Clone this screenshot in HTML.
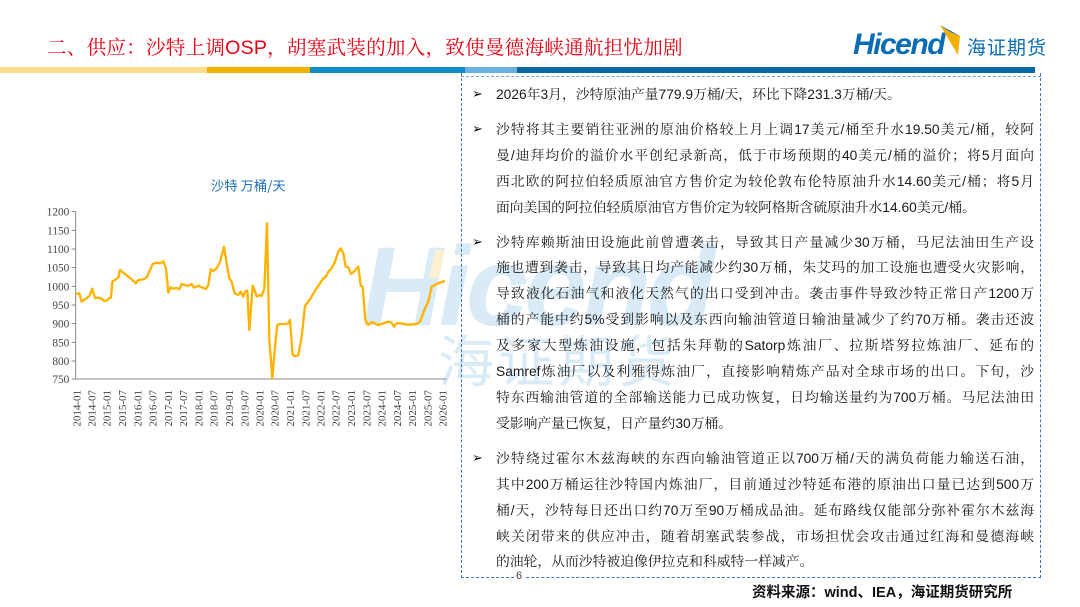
<!DOCTYPE html>
<html><head><meta charset="utf-8">
<style>
*{margin:0;padding:0;box-sizing:border-box}
body{width:1080px;height:607px;background:#fff;position:relative;overflow:hidden;font-family:"Liberation Sans","Noto Sans CJK SC",sans-serif;color:#111}
.title{position:absolute;left:47px;top:31px;font-size:19.6px;color:#e60012;font-family:"Liberation Sans","Noto Serif CJK SC",serif;white-space:nowrap;letter-spacing:0.2px}
.bar{position:absolute;top:67px;height:6px}
.box{position:absolute;left:461px;top:73px;width:580px;height:505px;border:1.5px dashed #4472c4;border-top:none}
.topdash{position:absolute;left:461px;top:76px;width:580px;border-top:1.5px dashed #7aa0d8}
.txt{position:absolute;left:474px;top:82px;width:560px;font-size:13.8px;line-height:25.9px;color:#1a1a1a;font-family:"Liberation Sans","Noto Serif CJK SC",serif}
.p{position:relative;padding-left:22px;margin-bottom:9px}
.p:before{content:"➢";position:absolute;left:-2px;top:0;font-size:13px;font-family:"DejaVu Sans",sans-serif;color:#000}
.l{display:block;text-align:justify;text-align-last:justify;white-space:nowrap}
.l.last{text-align-last:left}
.wm{position:absolute;color:#d9ebf6;font-weight:bold;white-space:nowrap}
</style></head><body>
<div class="wm" style="left:362px;top:222px;font-size:112px;font-style:italic;letter-spacing:-4px;font-family:'Liberation Sans',sans-serif">Hicend</div>
<div style="position:absolute;left:432px;top:250px;width:10px;height:28px;background:#fcf0d2;transform:skewX(-12deg)"></div>
<div class="wm" style="left:438px;top:318px;font-size:56px;font-weight:normal;letter-spacing:4px;font-family:'Noto Sans CJK SC',sans-serif">海证期货</div>

<div class="title">二、供应：沙特上调OSP，胡塞武装的加入，致使曼德海峡通航担忧加剧</div>

<div style="position:absolute;left:853px;top:28px;font-size:30px;font-weight:bold;font-style:italic;color:#0a6db3;letter-spacing:-1.5px;font-family:'Liberation Sans',sans-serif">Hicend</div>
<svg style="position:absolute;left:938px;top:22px" width="30" height="40" viewBox="0 0 30 40"><path d="M2 3 L22 14 L20 33 Z" fill="#f5b000"/><path d="M2 3 L22 14 L12 10 Z" fill="#1a77c0"/></svg>
<div style="position:absolute;left:967px;top:33px;font-size:19px;color:#0a6db3;font-family:'Noto Sans CJK SC',sans-serif;letter-spacing:1px">海证期货</div>

<div class="bar" style="left:0;width:207px;background:#fadc88"></div>
<div class="bar" style="left:207px;width:103px;background:#f3b000"></div>
<div class="bar" style="left:310px;width:155px;background:#0b8bc8"></div>
<div class="bar" style="left:465px;width:52px;background:#67b0e0"></div>
<div class="bar" style="left:517px;width:518px;background:#0867a6"></div>

<div class="topdash"></div>
<div class="box"></div>

<svg style="position:absolute;left:30px;top:170px" width="430" height="260" viewBox="0 0 1290 780">
<text x="655" y="62" font-size="40" fill="#1f6fb5" text-anchor="middle" font-family="Noto Sans CJK SC,sans-serif">沙特  万桶/天</text>
<g font-size="34" fill="#444" text-anchor="end" font-family="Liberation Serif,serif">
<text x="118" y="137">1200</text><text x="118" y="193">1150</text><text x="118" y="249">1100</text><text x="118" y="305">1050</text><text x="118" y="361">1000</text><text x="118" y="417">950</text><text x="118" y="473">900</text><text x="118" y="529">850</text><text x="118" y="585">800</text><text x="118" y="639">750</text>
</g>
<path d="M137 125V627H1250M125 125h12M125 181h12M125 237h12M125 293h12M125 349h12M125 405h12M125 461h12M125 517h12M125 573h12M125 627h12" stroke="#888" stroke-width="3" fill="none"/>
<polyline fill="none" stroke="#ffb300" stroke-width="7" stroke-linejoin="round" points="137,372 148,370 155,395 165,388 178,378 187,356 195,384 205,383 215,386 222,393 230,392 240,383 243,383 247,335 255,330 265,322 270,300 280,308 295,320 305,328 318,340 325,330 340,328 350,322 358,305 368,282 378,278 390,280 400,274 408,295 415,368 422,352 430,356 440,354 448,358 455,342 465,345 475,348 485,342 492,353 505,347 515,352 528,357 535,345 542,298 550,303 560,295 570,276 582,230 590,280 598,325 605,335 614,370 625,375 632,365 640,380 645,365 652,362 658,480 668,347 673,358 680,380 688,375 695,378 703,355 711,160 718,510 727,625 735,530 742,465 750,462 765,462 775,460 780,450 788,555 795,558 805,556 815,500 825,408 840,388 855,362 870,340 880,325 888,320 895,305 905,295 915,275 925,245 932,235 940,250 947,290 955,292 963,312 975,302 985,290 992,347 998,350 1006,450 1015,465 1025,456 1045,465 1060,460 1075,455 1085,458 1092,470 1100,460 1115,460 1125,463 1140,464 1160,462 1170,455 1185,415 1195,395 1205,350 1220,342 1230,338 1245,333"/>
<g font-size="33" fill="#444" font-family="Liberation Serif,serif">
<text transform="translate(151,770) rotate(-90)">2014-01</text>
<text transform="translate(197,770) rotate(-90)">2014-07</text>
<text transform="translate(242,770) rotate(-90)">2015-01</text>
<text transform="translate(288,770) rotate(-90)">2015-07</text>
<text transform="translate(334,770) rotate(-90)">2016-01</text>
<text transform="translate(380,770) rotate(-90)">2016-07</text>
<text transform="translate(426,770) rotate(-90)">2017-01</text>
<text transform="translate(471,770) rotate(-90)">2017-07</text>
<text transform="translate(517,770) rotate(-90)">2018-01</text>
<text transform="translate(563,770) rotate(-90)">2018-07</text>
<text transform="translate(609,770) rotate(-90)">2019-01</text>
<text transform="translate(655,770) rotate(-90)">2019-07</text>
<text transform="translate(700,770) rotate(-90)">2020-01</text>
<text transform="translate(746,770) rotate(-90)">2020-07</text>
<text transform="translate(792,770) rotate(-90)">2021-01</text>
<text transform="translate(838,770) rotate(-90)">2021-07</text>
<text transform="translate(884,770) rotate(-90)">2022-01</text>
<text transform="translate(929,770) rotate(-90)">2022-07</text>
<text transform="translate(975,770) rotate(-90)">2023-01</text>
<text transform="translate(1021,770) rotate(-90)">2023-07</text>
<text transform="translate(1067,770) rotate(-90)">2024-01</text>
<text transform="translate(1113,770) rotate(-90)">2024-07</text>
<text transform="translate(1158,770) rotate(-90)">2025-01</text>
<text transform="translate(1204,770) rotate(-90)">2025-07</text>
<text transform="translate(1250,770) rotate(-90)">2026-01</text>
</g>
</svg>

<div class="txt">
<div class="p"><span class="l last">2026年3月，沙特原油产量779.9万桶/天，环比下降231.3万桶/天。</span></div>
<div class="p">
<span class="l">沙特将其主要销往亚洲的原油价格较上月上调17美元/桶至升水19.50美元/桶，较阿</span>
<span class="l">曼/迪拜均价的溢价水平创纪录新高，低于市场预期的40美元/桶的溢价；将5月面向</span>
<span class="l">西北欧的阿拉伯轻质原油官方售价定为较伦敦布伦特原油升水14.60美元/桶；将5月</span>
<span class="l last">面向美国的阿拉伯轻质原油官方售价定为较阿格斯含硫原油升水14.60美元/桶。</span></div>
<div class="p">
<span class="l">沙特库赖斯油田设施此前曾遭袭击，导致其日产量减少30万桶，马尼法油田生产设</span>
<span class="l">施也遭到袭击，导致其日均产能减少约30万桶，朱艾玛的加工设施也遭受火灾影响，</span>
<span class="l">导致液化石油气和液化天然气的出口受到冲击。袭击事件导致沙特正常日产1200万</span>
<span class="l">桶的产能中约5%受到影响以及东西向输油管道日输油量减少了约70万桶。袭击还波</span>
<span class="l">及多家大型炼油设施，包括朱拜勒的Satorp炼油厂、拉斯塔努拉炼油厂、延布的</span>
<span class="l">Samref炼油厂以及利雅得炼油厂，直接影响精炼产品对全球市场的出口。下旬，沙</span>
<span class="l">特东西输油管道的全部输送能力已成功恢复，日均输送量约为700万桶。马尼法油田</span>
<span class="l last">受影响产量已恢复，日产量约30万桶。</span></div>
<div class="p">
<span class="l">沙特绕过霍尔木兹海峡的东西向输油管道正以700万桶/天的满负荷能力输送石油，</span>
<span class="l">其中200万桶运往沙特国内炼油厂，目前通过沙特延布港的原油出口量已达到500万</span>
<span class="l">桶/天，沙特每日还出口约70万至90万桶成品油。延布路线仅能部分弥补霍尔木兹海</span>
<span class="l">峡关闭带来的供应冲击，随着胡塞武装参战，市场担忧会攻击通过红海和曼德海峡</span>
<span class="l last">的油轮，从而沙特被迫像伊拉克和科威特一样减产。</span></div>
</div>

<div style="position:absolute;left:514px;top:570px;font-size:11px;color:#444;background:#fff;padding:0 2px">6</div>
<div style="position:absolute;left:752px;top:581px;font-size:14.5px;font-weight:bold;color:#111;white-space:nowrap">资料来源：wind、IEA，海证期货研究所</div>
</body></html>
